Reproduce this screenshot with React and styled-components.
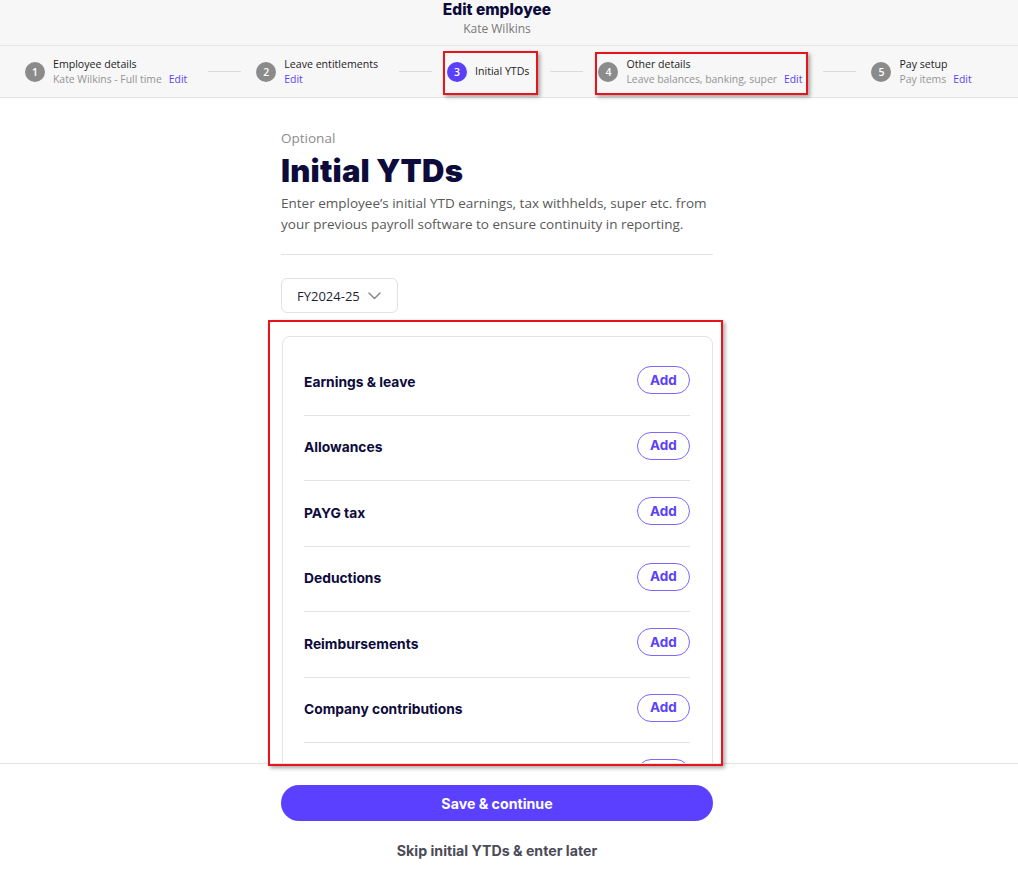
import React from "react";
import styled, { createGlobalStyle } from "styled-components";

const Global = createGlobalStyle`
  html, body { margin: 0; padding: 0; background: #fff; }
  body { font-family: "Open Sans", "Noto Sans", sans-serif; }
  * { box-sizing: border-box; }
`;

const NAVY = "#0d0b3b";
const PURPLE = "#5b3ff9";
const HEAD_FONT = `"Inter", "Lato", sans-serif`;
const BODY_FONT = `"Open Sans", "Noto Sans", sans-serif`;

const Page = styled.div`
  position: relative;
  width: 1018px;
  height: 870px;
  display: flex;
  flex-direction: column;
  overflow: hidden;
`;

const Header = styled.header`
  background: #f7f7f7;
  border-bottom: 1px solid #e2e2e2;
  flex: none;
`;

const TitleBlock = styled.div`
  height: 46px;
  border-bottom: 1px solid #e6e6e6;
  display: flex;
  flex-direction: column;
  align-items: center;
  padding-right: 24px;
`;

const Title = styled.div`
  font-family: ${HEAD_FONT};
  font-weight: 800;
  font-size: 15.5px;
  line-height: 19px;
  color: ${NAVY};
`;

const SubTitle = styled.div`
  font-family: ${BODY_FONT};
  font-size: 12px;
  line-height: 18px;
  color: #777;
  margin-top: 1px;
`;

const Stepper = styled.nav`
  height: 51px;
  display: flex;
  align-items: center;
  padding-left: 25px;
`;

const Step = styled.div`
  display: flex;
  align-items: center;
  gap: 8px;
`;

const Circle = styled.div`
  width: 20px;
  height: 20px;
  border-radius: 50%;
  background: ${(p) => (p.$active ? PURPLE : "#8b8b8b")};
  color: #fff;
  font-family: ${BODY_FONT};
  font-size: 10.5px;
  font-weight: 600;
  display: flex;
  align-items: center;
  justify-content: center;
  flex: none;
`;

const StepText = styled.div`
  display: flex;
  flex-direction: column;
  font-family: ${BODY_FONT};
  font-size: 10.6px;
  line-height: 15px;
`;

const StepLabel = styled.span`
  color: #1d1d1d;
  white-space: nowrap;
`;

const StepSub = styled.span`
  color: #949494;
  font-size: 10.4px;
  white-space: nowrap;
`;

const EditLink = styled.span`
  color: ${PURPLE};
  margin-left: ${(p) => (p.$solo ? "0" : "7px")};
`;

const Connector = styled.div`
  width: 33px;
  height: 1px;
  background: #dcdcdc;
  margin: 0 15px 0 21px;
`;

const Scroll = styled.main`
  flex: 1;
  overflow: hidden;
  display: flex;
  justify-content: center;
  padding-right: 24px;
`;

const Column = styled.div`
  width: 432px;
  padding-top: 31px;
`;

const Optional = styled.div`
  font-family: ${BODY_FONT};
  font-size: 13.5px;
  line-height: 18px;
  color: #8c8c8c;
`;

const Heading = styled.h1`
  margin: 6px 0 4px;
  font-family: ${HEAD_FONT};
  font-weight: 900;
  font-size: 31px;
  letter-spacing: 0.2px;
  line-height: 36px;
  color: ${NAVY};
`;

const Desc = styled.p`
  margin: 0;
  font-family: ${BODY_FONT};
  font-size: 13.5px;
  line-height: 21px;
  color: #595959;
`;

const Divider = styled.hr`
  border: 0;
  border-top: 1px solid #e3e3e3;
  margin: 19px 0 23px;
`;

const Select = styled.button`
  display: inline-flex;
  align-items: center;
  gap: 8px;
  height: 35px;
  padding: 0 16px 0 15px;
  border: 1px solid #e2e2e2;
  border-radius: 6px;
  background: #fff;
  font-family: ${BODY_FONT};
  font-size: 13px;
  white-space: nowrap;
  color: #1f1f3a;
`;

const Card = styled.section`
  margin-top: 23px;
  margin-left: 1px;
  border: 1px solid #e4e4e4;
  border-radius: 8px;
  padding: 13px 22px 0 21px;
  background: #fff;
`;

const Row = styled.div`
  height: 65.5px;
  display: flex;
  align-items: center;
  justify-content: space-between;
  border-bottom: 1px solid #e3e3e3;
`;

const RowLabel = styled.span`
  font-family: ${HEAD_FONT};
  font-weight: 700;
  font-size: 13.8px;
  color: ${NAVY};
  margin-bottom: 1px;
`;

const AddButton = styled.button`
  width: 53px;
  height: 28px;
  border-radius: 14px;
  border: 1px solid #7b67ff;
  background: #fff;
  color: ${PURPLE};
  font-family: ${HEAD_FONT};
  font-weight: 700;
  font-size: 13.5px;
  padding: 0 0 1px;
  margin-bottom: 4px;
`;

const Footer = styled.footer`
  flex: none;
  height: 107px;
  border-top: 1px solid #e3e3e3;
  display: flex;
  flex-direction: column;
  align-items: center;
  padding-top: 21px;
  padding-right: 24px;
  background: #fff;
`;

const Primary = styled.button`
  width: 432px;
  height: 36px;
  border-radius: 18px;
  border: 0;
  background: #5b41ff;
  color: #fff;
  font-family: ${HEAD_FONT};
  font-weight: 700;
  font-size: 14.2px;
`;

const SkipLink = styled.button`
  margin-top: 21px;
  border: 0;
  background: none;
  font-family: ${HEAD_FONT};
  font-weight: 700;
  font-size: 14.2px;
  color: #4b4b57;
  padding: 0;
`;

const Highlight = styled.div`
  position: absolute;
  border: 2px solid #e8141b;
  box-shadow: 2px 2px 4px rgba(0, 0, 0, 0.35);
  pointer-events: none;
`;

const Chevron = () => (
  <svg width="13" height="8" viewBox="0 0 13 8" fill="none">
    <path d="M1 1l5.5 5.5L12 1" stroke="#8a8a8a" strokeWidth="1.5" strokeLinecap="round" strokeLinejoin="round" />
  </svg>
);

const steps = [
  { n: 1, label: "Employee details", sub: "Kate Wilkins - Full time", edit: true },
  { n: 2, label: "Leave entitlements", sub: "", edit: true },
  { n: 3, label: "Initial YTDs", active: true },
  { n: 4, label: "Other details", sub: "Leave balances, banking, super", edit: true },
  { n: 5, label: "Pay setup", sub: "Pay items", edit: true },
];

const rows = [
  "Earnings & leave",
  "Allowances",
  "PAYG tax",
  "Deductions",
  "Reimbursements",
  "Company contributions",
  "Super",
];

export default function App() {
  return (
    <>
      <Global />
      <Page>
        <Header>
          <TitleBlock>
            <Title>Edit employee</Title>
            <SubTitle>Kate Wilkins</SubTitle>
          </TitleBlock>
          <Stepper>
            {steps.map((s, i) => (
              <React.Fragment key={s.n}>
                {i > 0 && <Connector />}
                <Step>
                  <Circle $active={s.active}>{s.n}</Circle>
                  <StepText>
                    <StepLabel>{s.label}</StepLabel>
                    {!s.active && (
                      <StepSub>
                        {s.sub}
                        {s.edit && <EditLink $solo={!s.sub}>Edit</EditLink>}
                      </StepSub>
                    )}
                  </StepText>
                </Step>
              </React.Fragment>
            ))}
          </Stepper>
        </Header>
        <Scroll>
          <Column>
            <Optional>Optional</Optional>
            <Heading>Initial YTDs</Heading>
            <Desc>
              Enter employee’s initial YTD earnings, tax withhelds, super etc. from your previous payroll
              software to ensure continuity in reporting.
            </Desc>
            <Divider />
            <Select>
              FY2024-25 <Chevron />
            </Select>
            <Card>
              {rows.map((r) => (
                <Row key={r}>
                  <RowLabel>{r}</RowLabel>
                  <AddButton>Add</AddButton>
                </Row>
              ))}
            </Card>
          </Column>
        </Scroll>
        <Footer>
          <Primary>Save &amp; continue</Primary>
          <SkipLink>Skip initial YTDs &amp; enter later</SkipLink>
        </Footer>
        <Highlight style={{ left: 443, top: 51, width: 95, height: 44 }} />
        <Highlight style={{ left: 595, top: 52, width: 213, height: 43 }} />
        <Highlight style={{ left: 268, top: 320, width: 455, height: 446 }} />
      </Page>
    </>
  );
}
